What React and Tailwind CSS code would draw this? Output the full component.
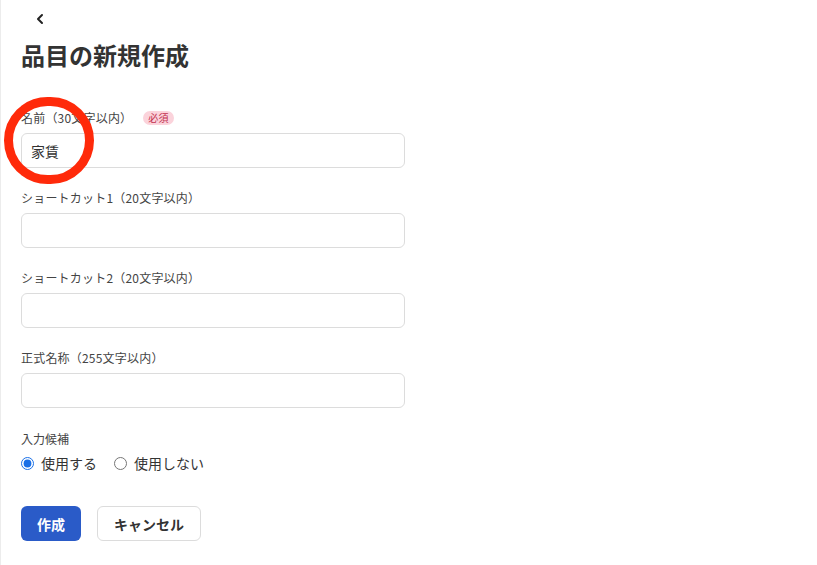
import { useState } from 'react'

const fields = [
  { label: 'ショートカット1（20文字以内）', value: '' },
  { label: 'ショートカット2（20文字以内）', value: '' },
  { label: '正式名称（255文字以内）', value: '' },
]

export default function App() {
  const [name, setName] = useState('家賃')
  const [suggest, setSuggest] = useState('use')

  return (
    <div className="relative min-h-[565px] w-[817px] bg-white border-l border-[#ececec] text-[#333]"
      style={{ fontFamily: "'Noto Sans CJK JP', 'Noto Sans', sans-serif" }}>
      <main className="px-[20px] pt-[13px]">

        {/* BACK */}
        <button className="block ml-[13px] w-[12px] h-[12px]">
          <svg width="12" height="12" viewBox="0 0 12 12" fill="none">
            <path d="M8 2 L4 6 L8 10" stroke="#222" strokeWidth="2" strokeLinecap="round" strokeLinejoin="round" />
          </svg>
        </button>

        {/* TITLE */}
        <h1 className="mt-[14px] text-2xl leading-8 font-bold text-[#333]">品目の新規作成</h1>

        {/* NAME */}
        <div className="mt-[39px]">
          <div className="flex items-center h-[16px] text-xs text-[#444] tracking-[0.2px]">
            <span>名前（30文字以内）</span>
            <span className="ml-[11px] px-[5px] h-[14px] leading-[14px] rounded-full bg-[#fbd3db] text-[#c23150] text-[10px]">必須</span>
          </div>
          <input value={name} onChange={e => setName(e.target.value)}
            className="mt-[7px] block w-[384px] h-[35px] rounded-md border border-[#dcdcdc] px-[9px] text-sm text-[#333] focus:outline-none" />
        </div>

        {fields.map(f => (
          <div key={f.label} className="mt-[22px]">
            <div className="h-[16px] leading-4 text-xs text-[#444] tracking-[0.2px]">{f.label}</div>
            <input defaultValue={f.value}
              className="mt-[7px] block w-[384px] h-[35px] rounded-md border border-[#dcdcdc] px-[9px] text-sm focus:outline-none" />
          </div>
        ))}

        {/* SUGGEST */}
        <div className="mt-[23px]">
          <div className="h-[16px] leading-4 text-xs text-[#444]">入力候補</div>
          <div className="mt-[6px] flex items-center h-[20px] text-sm text-[#333]">
            <label className="flex items-center gap-[7px] cursor-pointer">
              <input type="radio" name="suggest" checked={suggest === 'use'} onChange={() => setSuggest('use')}
                className="m-0 w-[13px] h-[13px] accent-[#1a6fe6]" />
              <span>使用する</span>
            </label>
            <label className="ml-[17px] flex items-center gap-[7px] cursor-pointer">
              <input type="radio" name="suggest" checked={suggest === 'none'} onChange={() => setSuggest('none')}
                className="m-0 w-[13px] h-[13px] accent-[#1a6fe6]" />
              <span>使用しない</span>
            </label>
          </div>
        </div>

        {/* ACTIONS */}
        <div className="mt-[33px] flex items-center gap-[16px]">
          <button className="w-[60px] h-[35px] rounded-md bg-[#2a5bc8] text-white text-sm font-bold">作成</button>
          <button className="w-[104px] h-[35px] rounded-md border border-[#dcdcdc] bg-white text-[#333] text-sm font-bold">キャンセル</button>
        </div>
      </main>

      {/* ANNOTATION */}
      <div className="absolute left-[3px] top-[97px] w-[90px] h-[87px] rounded-full border-[9px] border-[#ff2a0a] pointer-events-none" />
    </div>
  )
}
